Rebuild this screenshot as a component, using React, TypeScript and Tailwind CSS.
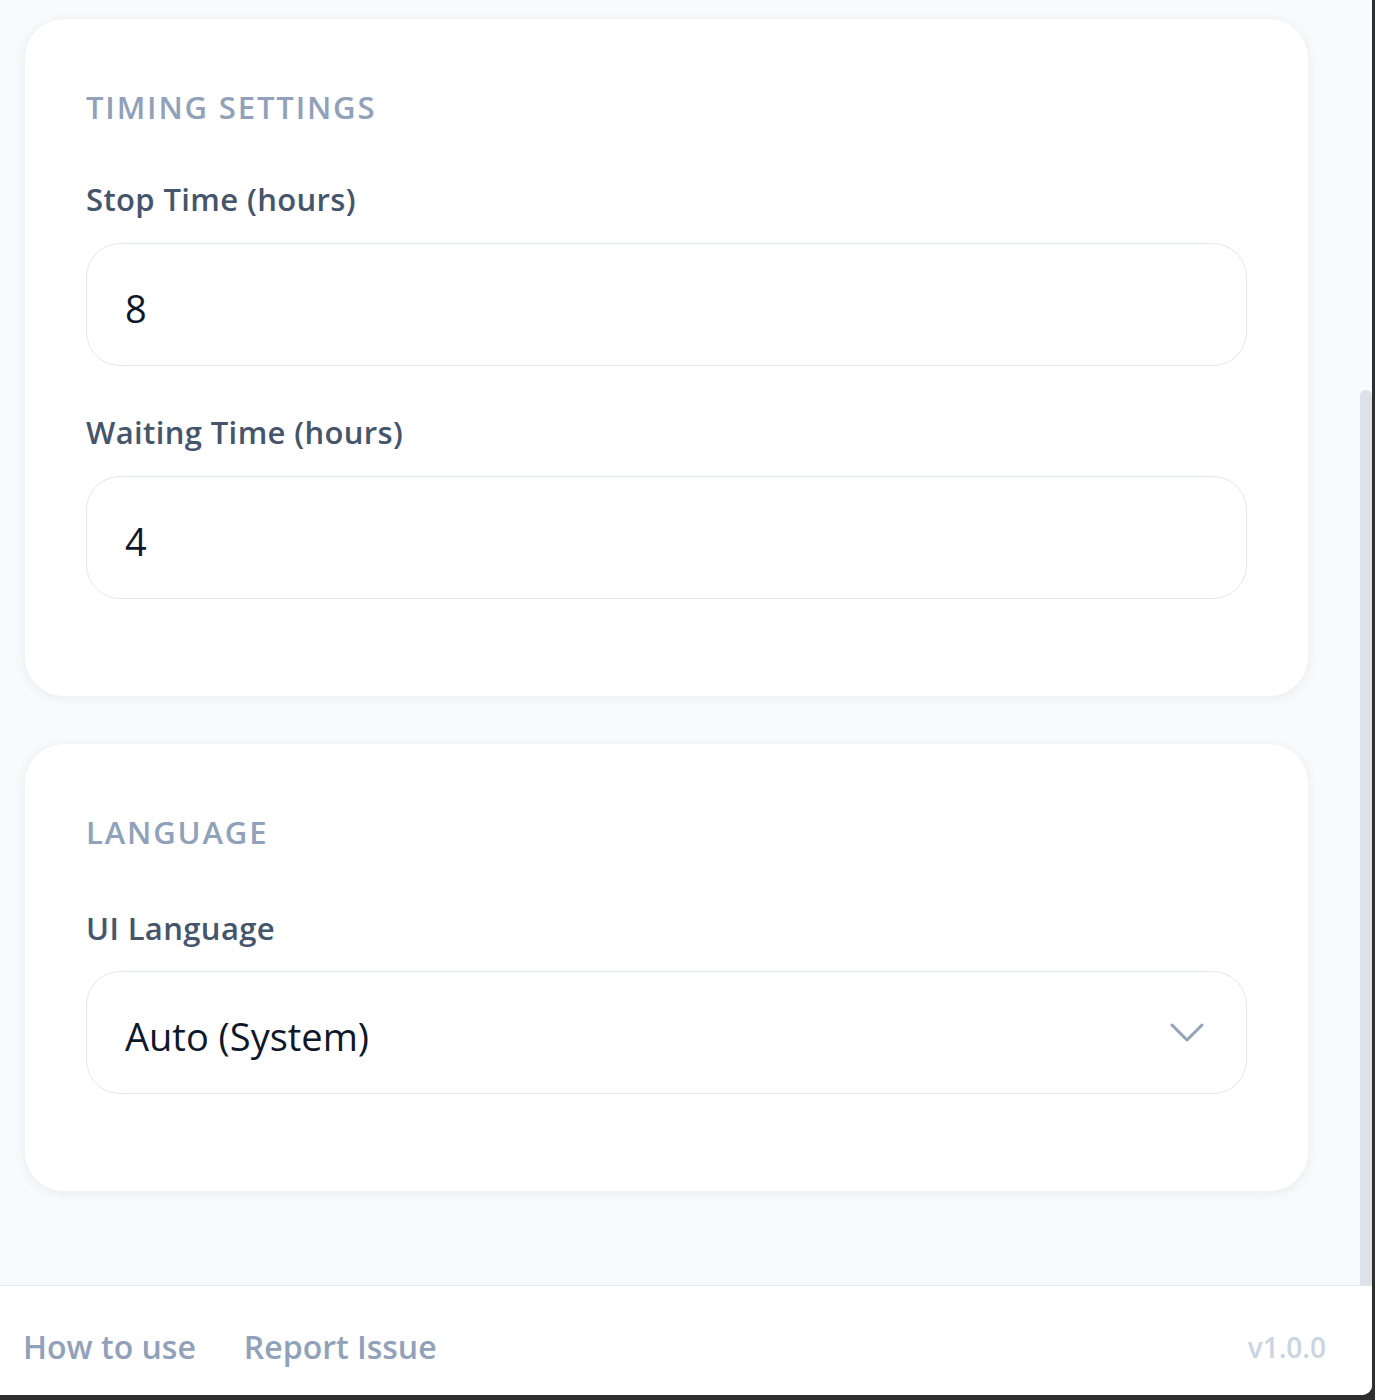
const font = "font-['Open_Sans','Noto_Sans',sans-serif]";

function Field({ label, value }: { label: string; value: string }) {
  return (
    <div className="flex flex-col">
      <label className="mb-[24px] text-[31px] leading-[40px] font-semibold tracking-[0.012em] text-slate-600">{label}</label>
      <div className="flex h-[123px] items-center rounded-[34px] border border-slate-200 bg-white px-[38px] text-[38px] text-slate-900">
        <span className="pt-[8px]">{value}</span>
      </div>
    </div>
  );
}

function SelectField({ label, value }: { label: string; value: string }) {
  return (
    <div className="flex flex-col">
      <label className="mb-[23px] text-[31px] leading-[40px] font-semibold tracking-[0.012em] text-slate-600">{label}</label>
      <div className="flex h-[123px] items-center justify-between rounded-[34px] border border-slate-200 bg-white pl-[38px] pr-[42px] text-[38px] text-slate-900">
        <span className="pt-[8px]">{value}</span>
        <svg width="34" height="20" viewBox="0 0 34 20" fill="none">
          <polyline points="2,2 17,17 32,2" stroke="#94a3b8" strokeWidth="3" strokeLinecap="round" strokeLinejoin="round" />
        </svg>
      </div>
    </div>
  );
}

function Card({ title, gap, children }: { title: string; gap: string; children: React.ReactNode }) {
  return (
    <section className="rounded-[40px] border border-slate-100 bg-white px-[61px] pt-[68px] pb-[97px] shadow-[0_2px_12px_rgba(15,23,42,0.06)]">
      <h2 className={`${gap} text-[31px] leading-[40px] font-semibold uppercase tracking-[0.06em] text-slate-400`}>
        {title}
      </h2>
      {children}
    </section>
  );
}

export default function App() {
  return (
    <div className={`h-[1400px] w-[1375px] overflow-hidden bg-[#2f2f2f] ${font}`}>
      <div className="flex h-[1395px] w-[1372px] flex-col overflow-hidden rounded-br-[10px] bg-white">
        {/* Scroll area */}
        <div className="flex h-[1286px] border-b border-slate-200 bg-slate-50">
          <main className="flex flex-1 flex-col gap-[46px] pl-6 pr-[51px] pt-[18px]">
            <Card title="Timing Settings" gap="mb-[52px]">
              <div className="flex flex-col gap-[46px]">
                <Field label="Stop Time (hours)" value="8" />
                <Field label="Waiting Time (hours)" value="4" />
              </div>
            </Card>
            <Card title="Language" gap="mb-[56px]">
              <SelectField label="UI Language" value="Auto (System)" />
            </Card>
          </main>
          <div className="flex w-[12px] flex-col pt-[390px]">
            <div className="flex-1 rounded-t-[6px] bg-[#dde1e8]" />
          </div>
        </div>

        {/* Footer */}
        <footer className="flex flex-1 items-center bg-white pl-[23px] pr-[46px] pt-[12px]">
          <div className="flex items-center gap-[48px] text-[32px] font-semibold text-slate-400">
            <a>How to use</a>
            <a>Report Issue</a>
          </div>
          <span className="ml-auto text-[28px] font-semibold text-slate-300">v1.0.0</span>
        </footer>
      </div>
    </div>
  );
}
